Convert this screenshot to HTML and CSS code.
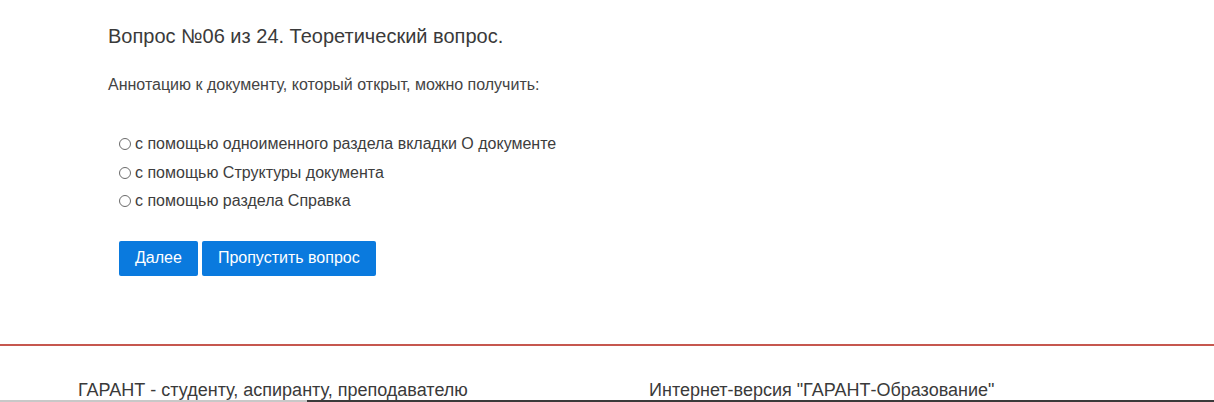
FILE: index.html
```html
<!DOCTYPE html>
<html lang="ru">
<head>
<meta charset="utf-8">
<title>Тестирование</title>
<link rel="stylesheet" href="styles.css">
</head>
<body>
<main class="test">
  <h1 class="test__title">Вопрос №06 из 24. Теоретический вопрос.</h1>
  <p class="test__question">Аннотацию к документу, который открыт, можно получить:</p>
  <form class="test__form">
    <ul class="answers">
      <li class="answers__item"><label><span class="radio"></span>с помощью одноименного раздела вкладки О документе</label></li>
      <li class="answers__item"><label><span class="radio"></span>с помощью Структуры документа</label></li>
      <li class="answers__item"><label><span class="radio"></span>с помощью раздела Справка</label></li>
    </ul>
    <div class="actions">
      <button type="button" class="btn">Далее</button>
      <button type="button" class="btn">Пропустить вопрос</button>
    </div>
  </form>
</main>
<footer class="footer">
  <div class="footer__cols">
    <div class="footer__col footer__col--left">ГАРАНТ - студенту, аспиранту, преподавателю</div>
    <div class="footer__col">Интернет-версия "ГАРАНТ-Образование"</div>
  </div>
  <div class="footer__bar"><span class="footer__bar-light"></span><span class="footer__bar-dark"></span></div>
</footer>
</body>
</html>
```
FILE: styles.css
```css
html, body {
  margin: 0;
  padding: 0;
  background: #fff;
  overflow: hidden;
}
body {
  width: 1214px;
  height: 402px;
  font-family: Arial, "Liberation Sans", sans-serif;
  color: #444;
  display: flex;
  flex-direction: column;
}
.test {
  padding: 0 0 0 108px;
  height: 345px;
}
.test__title {
  margin: 0;
  padding-top: 25px;
  font-size: 20px;
  font-weight: normal;
  line-height: 22px;
  color: #3a3a3a;
}
.test__question {
  margin: 0;
  padding-top: 29px;
  font-size: 16px;
  line-height: 18px;
  color: #444;
}
.test__form {
  padding-left: 11px;
  padding-top: 36px;
}
.answers {
  list-style: none;
  margin: 0;
  padding: 0;
}
.answers__item {
  font-size: 16px;
  line-height: 28.5px;
  height: 28.5px;
  color: #3d3d3d;
}
.answers__item label {
  display: flex;
  align-items: center;
}
.radio {
  width: 12px;
  height: 12px;
  border: 1px solid #6a6a6a;
  border-radius: 50%;
  margin-right: 4px;
  box-sizing: border-box;
}
.actions {
  display: flex;
  gap: 4px;
  margin-top: 25px;
}
.btn {
  font-family: Arial, "Liberation Sans", sans-serif;
  font-size: 16px;
  color: #fff;
  background: #0a7ade;
  border: none;
  border-radius: 2px;
  height: 35px;
  padding: 0 16px;
}
.footer {
  border-top: 2px solid #c6574f;
  flex: 1;
  display: flex;
  flex-direction: column;
}
.footer__cols {
  display: flex;
  padding-left: 78px;
  padding-top: 34px;
  flex: 1;
}
.footer__col {
  font-size: 18px;
  line-height: 20px;
  color: #3a3a3a;
}
.footer__col--left {
  width: 571px;
}
.footer__bar {
  display: flex;
  height: 2px;
}
.footer__bar-light {
  width: 307px;
  background: #c8c8c8;
}
.footer__bar-dark {
  flex: 1;
  background: #3a3a3a;
}
```
